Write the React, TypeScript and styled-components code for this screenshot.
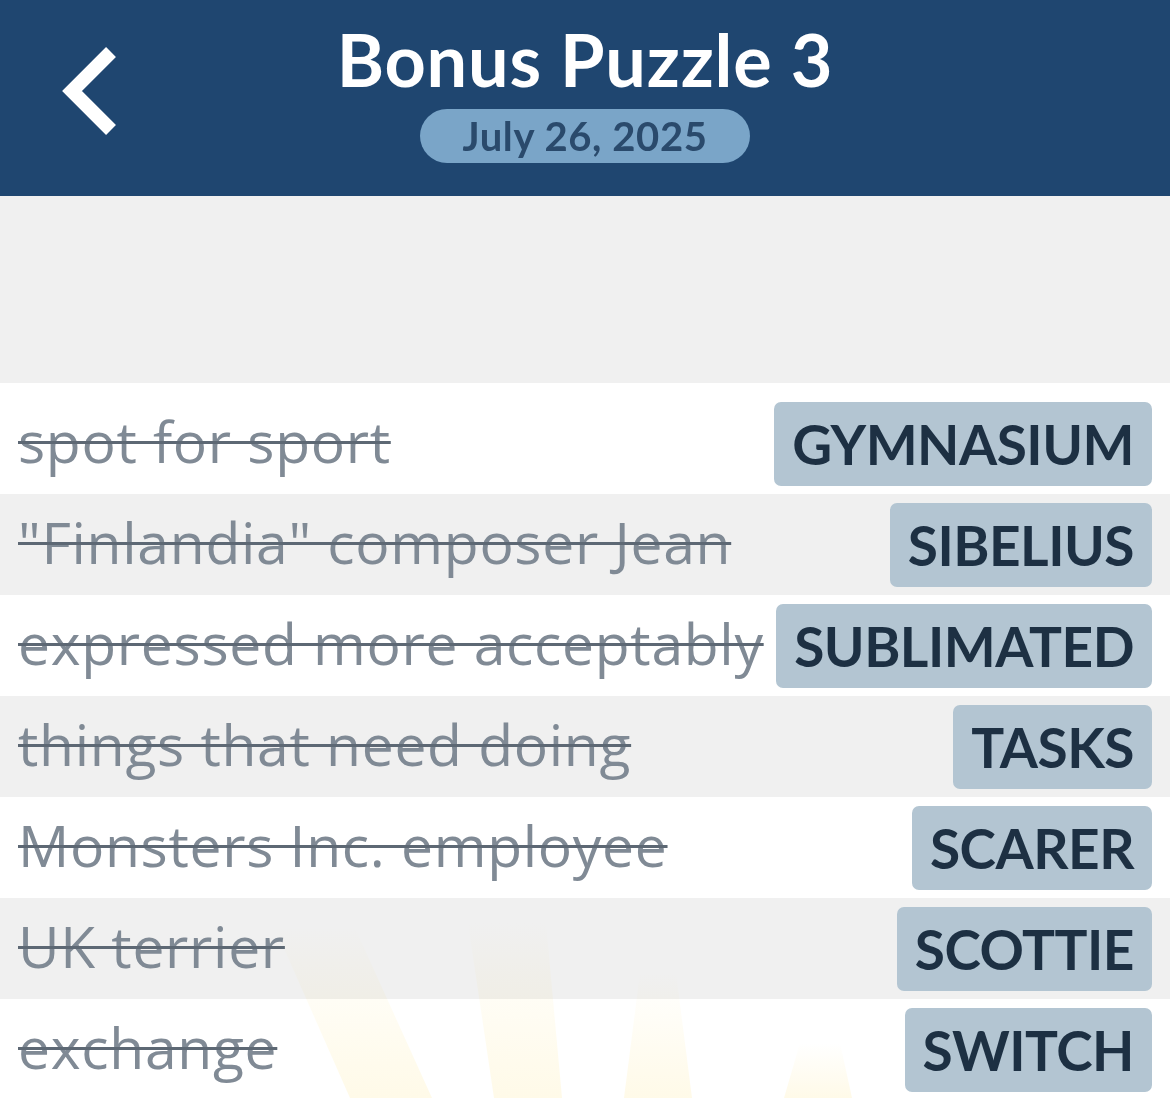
import React from "react";
import styled, { createGlobalStyle } from "styled-components";

const Global = createGlobalStyle`
  html, body { margin: 0; padding: 0; background: #ffffff; }
  body { font-family: "Lato", "Noto Sans", sans-serif; }
  * { box-sizing: border-box; }
`;

const Page = styled.div`
  width: 1170px;
  min-height: 1098px;
  display: flex;
  flex-direction: column;
  background: #ffffff;
  overflow: hidden;
`;

const Header = styled.header`
  height: 196px;
  background: #1f4670;
  display: grid;
  grid-template-columns: 1fr auto 1fr;
  align-items: start;
`;

const BackButton = styled.button`
  justify-self: start;
  margin: 46px 0 0 58px;
  width: 64px;
  height: 90px;
  padding: 0;
  border: 0;
  background: transparent;
  display: flex;
  align-items: center;
  justify-content: center;
  cursor: pointer;
`;

const TitleBlock = styled.div`
  display: flex;
  flex-direction: column;
  align-items: center;
  padding-top: 19px;
`;

const Title = styled.h1`
  margin: 0;
  font-family: "Lato", sans-serif;
  font-weight: 700;
  font-size: 72px;
  line-height: 80px;
  color: #ffffff;
  letter-spacing: 0.8px;
`;

const DatePill = styled.div`
  margin-top: 10px;
  height: 54px;
  padding: 0 42px;
  border-radius: 27px;
  background: #7aa5c8;
  display: flex;
  align-items: center;
  font-family: "Lato", sans-serif;
  font-weight: 700;
  font-size: 40px;
  letter-spacing: 0.6px;
  color: #2a4a6c;
`;

const Spacer = styled.div`
  height: 187px;
  background: #f0f0f0;
`;

const List = styled.div`
  position: relative;
  flex: 1;
  padding-top: 10px;
  background: #ffffff;
`;

const Rays = styled.svg`
  position: absolute;
  left: 0;
  top: 0;
  width: 1170px;
  height: 715px;
  z-index: 2;
  pointer-events: none;
  mix-blend-mode: multiply;
`;

const Row = styled.div<{ $alt: boolean }>`
  height: 101px;
  padding: 0 18px;
  display: flex;
  align-items: center;
  justify-content: space-between;
  background: ${(p) => (p.$alt ? "#f0f0f0" : "#ffffff")};
`;

const Clue = styled.span`
  margin-bottom: 6px;
  font-family: "Open Sans", "Noto Sans", sans-serif;
  font-size: 57px;
  font-weight: 400;
  letter-spacing: 0.7px;
  color: #808a95;
  white-space: nowrap;
  text-decoration: line-through;
  text-decoration-color: #5d6874;
  text-decoration-thickness: 3px;
`;

const Answer = styled.span`
  height: 84px;
  padding: 0 18px;
  border-radius: 7px;
  background: #b3c5d2;
  display: flex;
  align-items: center;
  font-family: "Lato", sans-serif;
  font-weight: 700;
  font-size: 55px;
  color: #1d3043;
  letter-spacing: -0.5px;
  white-space: nowrap;
`;

const rows: [string, string][] = [
  ["spot for sport", "GYMNASIUM"],
  ['"Finlandia" composer Jean', "SIBELIUS"],
  ["expressed more acceptably", "SUBLIMATED"],
  ["things that need doing", "TASKS"],
  ["Monsters Inc. employee", "SCARER"],
  ["UK terrier", "SCOTTIE"],
  ["exchange", "SWITCH"],
];

export default function App() {
  return (
    <Page>
      <Global />
      <Header>
        <BackButton aria-label="Back">
          <svg width="60" height="90" viewBox="0 0 60 90">
            <path d="M51 6 L12 45 L51 84" fill="none" stroke="#ffffff" strokeWidth="14" strokeLinejoin="miter" />
          </svg>
        </BackButton>
        <TitleBlock>
          <Title>Bonus Puzzle 3</Title>
          <DatePill>July 26, 2025</DatePill>
        </TitleBlock>
        <div />
      </Header>
      <Spacer />
      <List>
        <Rays viewBox="0 0 1170 715">
          <defs>
            <linearGradient id="rayFade" x1="0" y1="0" x2="0" y2="1">
              <stop offset="0" stopColor="#ffffff" />
              <stop offset="1" stopColor="#fffae8" />
            </linearGradient>
          </defs>
          <g fill="url(#rayFade)">
            <polygon points="275,545 355,545 432,715 350,715" />
            <polygon points="468,540 546,540 562,715 494,715" />
            <polygon points="640,590 676,590 692,715 624,715" />
            <polygon points="800,660 840,660 852,715 784,715" />
          </g>
        </Rays>
        {rows.map(([c, a], i) => (
          <Row key={a} $alt={i % 2 === 1}>
            <Clue>{c}</Clue>
            <Answer>{a}</Answer>
          </Row>
        ))}
      </List>
    </Page>
  );
}
